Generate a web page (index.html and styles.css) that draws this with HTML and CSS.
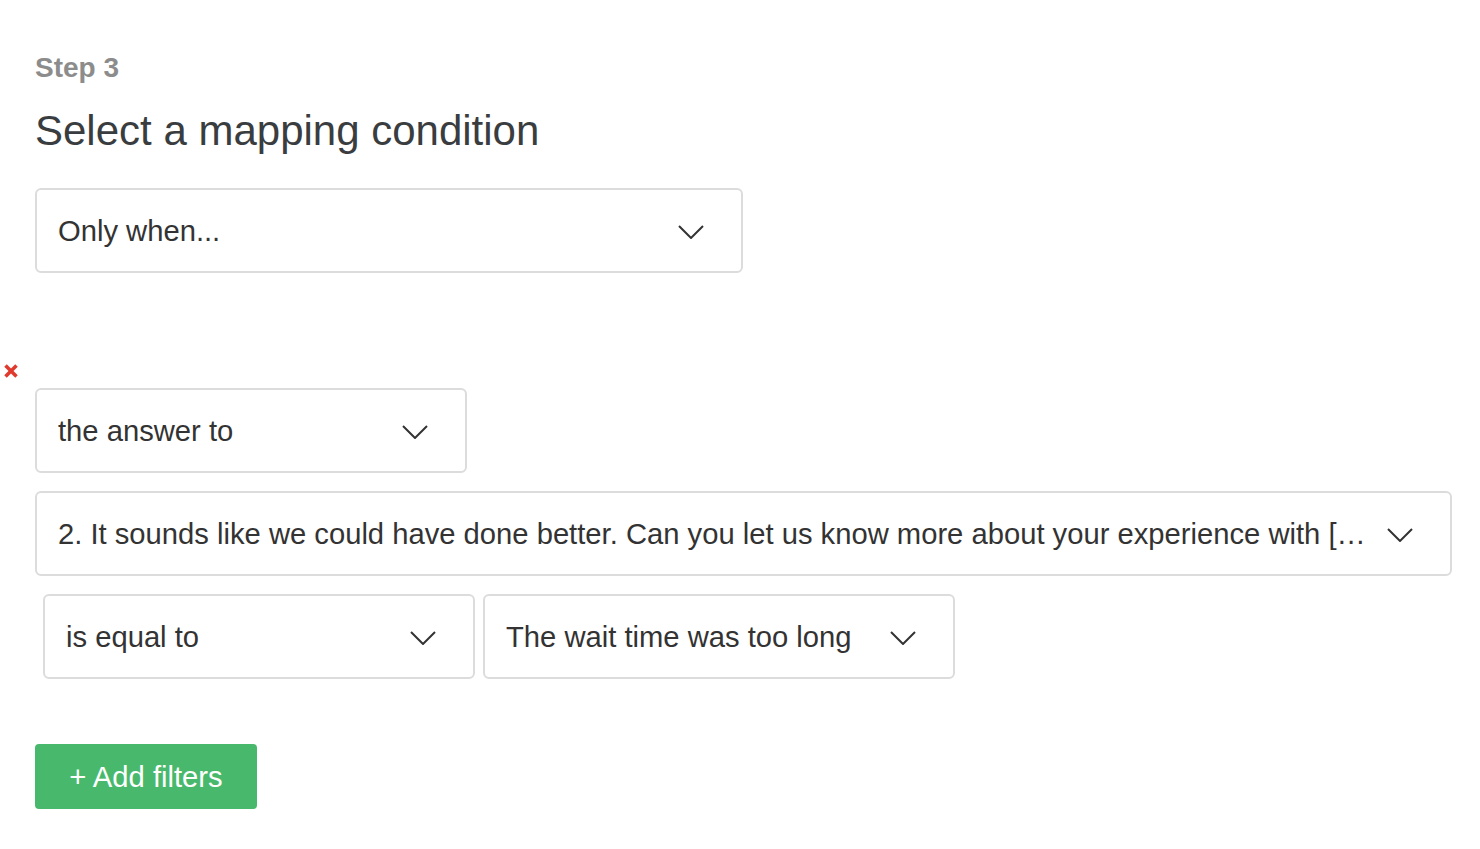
FILE: index.html
```html
<!DOCTYPE html>
<html>
<head>
<title>Mapping condition</title>
<link rel="stylesheet" href="styles.css">
</head>
<body>
<div class="page">
  <div class="step">Step 3</div>
  <h1 class="title">Select a mapping condition</h1>

  <div class="select select-mode">
    <span class="select-text">Only when...</span>
    <svg class="chevron" width="26" height="14" viewBox="0 0 26 14"><polyline points="1,1 13,13 25,1" /></svg>
  </div>

  <div class="filter">
    <div class="remove">
      <svg width="16" height="16" viewBox="0 0 16 16"><line x1="2.5" y1="2.5" x2="13.5" y2="13.5" /><line x1="13.5" y1="2.5" x2="2.5" y2="13.5" /></svg>
    </div>

    <div class="select select-source">
      <span class="select-text">the answer to</span>
      <svg class="chevron" width="26" height="14" viewBox="0 0 26 14"><polyline points="1,1 13,13 25,1" /></svg>
    </div>

    <div class="select select-question">
      <span class="select-text">2. It sounds like we could have done better. Can you let us know more about your experience with [&hellip;</span>
      <svg class="chevron" width="26" height="14" viewBox="0 0 26 14"><polyline points="1,1 13,13 25,1" /></svg>
    </div>

    <div class="rule">
      <div class="select select-operator">
        <span class="select-text">is equal to</span>
        <svg class="chevron" width="26" height="14" viewBox="0 0 26 14"><polyline points="1,1 13,13 25,1" /></svg>
      </div>
      <div class="select select-value">
        <span class="select-text">The wait time was too long</span>
        <svg class="chevron" width="26" height="14" viewBox="0 0 26 14"><polyline points="1,1 13,13 25,1" /></svg>
      </div>
    </div>
  </div>

  <button class="add-filter" type="button">+ Add filters</button>
</div>
</body>
</html>
```

FILE: styles.css
```css
body {
  margin: 0;
  font-family: "Liberation Sans", Arial, sans-serif;
  color: #333;
  background: #fff;
}

.page {
  padding: 52px 0 0 35px;
}

.step {
  font-size: 28px;
  line-height: 32px;
  font-weight: bold;
  color: #8c8c8c;
}

.title {
  margin: 23px 0 0;
  font-size: 42px;
  line-height: 48px;
  font-weight: normal;
  color: #3a3d40;
}

.select {
  display: flex;
  align-items: center;
  justify-content: space-between;
  box-sizing: border-box;
  height: 85px;
  padding: 2px 37px 0 21px;
  border: 2px solid #dcdcdc;
  border-radius: 6px;
  font-size: 29.2px;
  color: #333;
  background: #fff;
}

.select-text {
  white-space: nowrap;
}

.chevron {
  flex-shrink: 0;
  margin-left: 12px;
  fill: none;
  stroke: #333;
  stroke-width: 2;
}

.select-mode {
  width: 708px;
  margin-top: 33px;
}

.filter {
  margin-top: 87px;
}

.remove {
  height: 20px;
  margin-left: -32px;
  padding-top: 3px;
  box-sizing: border-box;
}

.remove svg {
  display: block;
  stroke: #e03a2f;
  stroke-width: 3.5;
}

.select-source {
  width: 432px;
  margin-top: 8px;
}

.select-question {
  width: 1417px;
  margin-top: 18px;
}

.rule {
  display: flex;
  gap: 8px;
  margin-top: 18px;
  padding-left: 8px;
}

.select-operator {
  width: 432px;
}

.select-value {
  width: 472px;
}

.add-filter {
  display: block;
  margin-top: 65px;
  width: 222px;
  height: 65px;
  padding: 2px 0 0;
  border: none;
  border-radius: 4px;
  background-color: #48b96c;
  color: #fff;
  font-family: "Liberation Sans", Arial, sans-serif;
  font-size: 29.2px;
  cursor: pointer;
}
```
